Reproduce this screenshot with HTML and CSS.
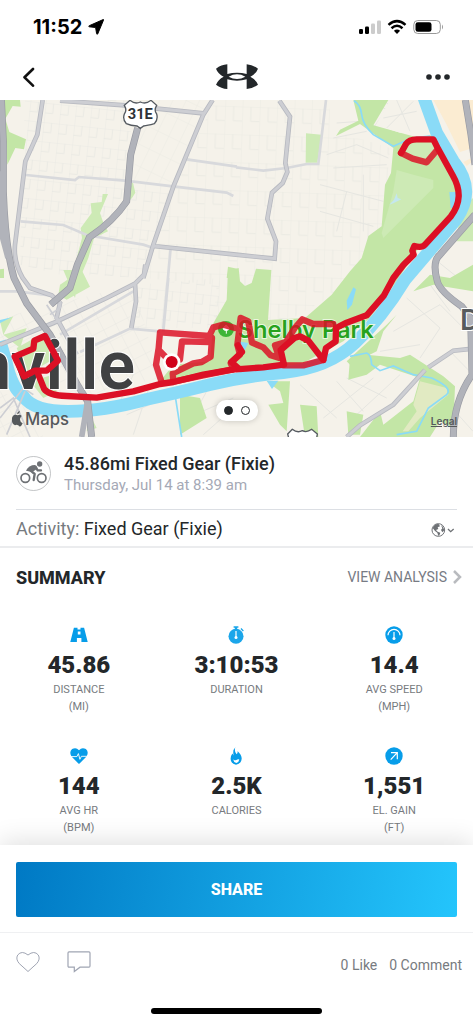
FILE: index.html
```html
<!DOCTYPE html>
<html lang="en">
<head>
<meta charset="utf-8">
<meta name="viewport" content="width=device-width, initial-scale=1">
<title>Workout</title>
<link rel="stylesheet" href="styles.css">
</head>
<body>
<div class="status">
  <div class="status-time">11:52
    <svg class="loc" viewBox="0 0 16 16" aria-hidden="true"><path d="M15.3.5Q15.8.3 15.5 1.1L9.8 14.7Q9.2 16 8.6 14.6L7.6 8.5 1.4 7.8Q0 7.4 1.3 6.7Z" stroke="#000" stroke-linejoin="round"/></svg>
  </div>
  <svg class="status-icons" viewBox="0 0 86 16" aria-hidden="true">
    <rect x="1" y="10" width="4" height="5" rx="1.3"/><rect x="7" y="7.5" width="4" height="7.500" rx="1.3"/>
    <rect x="13" y="4.500" width="4" height="10.500" rx="1.3" fill="#ccc"/><rect x="19" y="1.500" width="4" height="13.500" rx="1.3" fill="#ccc"/>
    <g fill="none" stroke="#000" stroke-width="2.500"><path d="M30.500 5.900Q39 -1.700 47.500 5.900"/><path d="M33.500 9.200Q39 4.300 44.500 9.200"/></g>
    <path d="M39 15 35.900 11.800Q39 9.200 42.100 11.800Z"/>
    <rect x="55.800" y="1.500" width="26.500" height="13" rx="4" fill="none" stroke="#999"/>
    <rect x="57.500" y="3.200" width="16" height="9.600" rx="2.300"/><path d="M84 5.500q2 2.500 0 5z" fill="#999"/>
  </svg>
</div>
<header class="nav">
  <button class="icon-btn" aria-label="Back"><svg width="13" height="20" viewBox="0 0 13 20"><path d="M11 2 2.500 10.300 11 18.700" fill="none" stroke="#111" stroke-width="2.600" stroke-linecap="round" stroke-linejoin="round"/></svg></button>
  <svg class="logo" viewBox="0 0 126 76" role="img" aria-label="Under Armour">
    <path d="M0 14Q16 2 34 1V30Q48 26 63 26T92 30V1Q110 2 126 14 120 30 103 38 120 47 126 62 110 74 92 75V46Q78 50 63 50T34 46V75Q16 74 0 62 6 47 23 38 6 30 0 14Z" fill="#23272a"/>
    <path d="M38 38Q50 31 63 31T88 38Q76 45 63 45T38 38Z" fill="#fff"/>
  </svg>
  <button class="icon-btn nav-more" aria-label="More options"><svg width="26" height="8" viewBox="0 0 26 8" fill="#23272a"><circle cx="4" cy="4" r="2.800"/><circle cx="13" cy="4" r="2.800"/><circle cx="22" cy="4" r="2.800"/></svg></button>
</header>
<main>
<section class="map" aria-label="Route map">
<svg viewBox="0 6 1419 1011" class="map-art">
  <defs>
    <pattern id="ga" width="46" height="58" patternUnits="userSpaceOnUse" patternTransform="rotate(6)"><path d="M0 0H46M0 30H24M0 0V58M24 0V30" fill="none" stroke="#e8e8e2" stroke-width="2.500"/></pattern>
    <pattern id="gb" width="52" height="84" patternUnits="userSpaceOnUse" patternTransform="rotate(2)"><path d="M0 0H52M26 44H52M0 0V84M26 0V44" fill="none" stroke="#e8e8e2" stroke-width="2.500"/></pattern>
    <pattern id="gc" width="40" height="40" patternUnits="userSpaceOnUse" patternTransform="rotate(-27)"><path d="M0 0H40M0 0V40" fill="none" stroke="#e7e7e2" stroke-width="2.500"/></pattern>
    <pattern id="gd" width="36" height="60" patternUnits="userSpaceOnUse" patternTransform="rotate(26)"><path d="M0 0H36M0 0V60" fill="none" stroke="#e8e8e2" stroke-width="2.500"/></pattern>
  </defs>
  <rect y="6" width="1419" height="1011" fill="#f5f2ea"/>
  <path d="M75 6H400L375 330 260 420 220 540 60 500Z" fill="url(#ga)"/>
  <path d="M415 90 440 6H635L520 265 400 250Z" fill="url(#gd)"/>
  <path d="M645 6H980L1010 100 1170 150 1150 380 1080 500 1020 580 860 670H640L650 560 430 540 520 270Z" fill="url(#gb)"/>
  <path d="M395 250 520 265 430 540 240 530 270 420 375 350Z" fill="url(#ga)"/>
  <path d="M410 560 660 540 650 690 400 690Z" fill="url(#ga)"/>
  <path d="M0 660 400 560 480 840 230 900 0 830Z" fill="url(#gc)"/>
  <path d="M0 880 110 930 130 1017H0Z" fill="url(#gc)"/>
  <g fill="none" stroke="#e6e6e1" stroke-width="3">
    <path d="M1010 75 1080 70 1170 100M1120 90 1170 20M1150 6 1250 95M1190 6 1220 90M1090 6 1250 70M1000 120 1100 100M980 170 1070 140 1165 180M1000 210 1160 200M960 260 1150 310M1090 230V400M1040 280 1010 400M960 340 1120 385"/>
    <path d="M1180 700 1320 620 1400 700M1220 600 1320 690 1260 780M1290 560 1350 640M1140 760 1260 740M1010 850 1090 940M1040 840 1160 900M900 860 1010 960M970 960 1120 840M1070 950 1200 830M1330 900 1419 1000M1350 760 1419 830M1300 480 1400 560"/>
    <path d="M350 930 400 830M380 950 520 890M400 1010 450 860M560 990 620 880M560 960 700 900M610 1010 700 930"/>
  </g>
  <!-- Parks -->
  <g fill="#c3e6a6">
    <path d="M12 6H60L62 26 38 24 16 62 28 102 78 124 72 154 46 150 22 200ZM0 514 12 512V540H0ZM684 506 711 512V540H680Z"/>
    <path d="M768 512 812 516 808 544H764ZM1090 6H1165L1120 82 1250 118 1308 110 1365 220 1372 320 1260 445 1190 550 1110 660 1030 730 900 800 708 812 480 850 520 800 630 790 640 676 680 606 684 520 716 510 720 550 735 564 755 555 768 512 814 516 804 666 915 660 995 590 1050 520 1085 480 1105 414 1145 385 1155 260 1173 225 1180 150 1080 78 1008 114 1020 95 1075 68 1060 6Z"/>
    <path d="M1290 530 1350 540 1419 500V580L1300 560 1240 580ZM1190 650 1150 700 1130 760 1050 800 1040 790 1160 680Z"/>
    <path d="M1050 780 1100 770 1200 780 1230 770 1330 835 1365 865 1360 990 1320 970 1290 1017H1080L1140 940 1150 980 1240 910 1260 840 1140 800 1100 830 1045 845Z"/>
    <path d="M720 850H870L860 1000 840 980 805 920 850 915 840 880 800 850ZM900 920 950 925 955 1017H915ZM1040 940 1090 950 1080 1010H1045ZM540 890 600 900 620 960 540 1010Z"/>
  </g>
  <g fill="#cdeab5">
    <path d="M308 288H324L300 345 312 380 324 400 282 420 265 480 240 540H214L246 420 242 390 275 345 272 316 305 312ZM398 250 406 284 396 300 375 320ZM918 106 964 110 952 194H917ZM180 560 245 516 270 566 200 605 175 590ZM50 750 140 700 150 790 80 830ZM90 850 160 830 170 880 130 900ZM270 950 290 990 260 1000ZM10 710 80 690 60 750ZM0 670 40 655 10 710ZM190 516 240 516 225 600Z"/>
    <path d="M1190 216 1240 230 1300 246 1300 270 1150 420 1145 405 1180 280ZM1380 340 1419 300V430H1370Z"/>
  </g>
  <path d="M1205 150 1225 136 1300 134 1304 156 1276 186 1238 176Z" fill="#cdeab5"/>
  <path d="M1128 80 1170 6H1256L1290 98 1200 104Z" fill="#f5f2ea"/>
  <path d="M1150 60 1250 40M1190 6 1230 100M1160 90 1240 10" fill="none" stroke="#e6e6e1" stroke-width="3"/>
  <path d="M1300 6H1419V150L1380 162 1340 80Z" fill="#fbecd2"/>
  <path d="M1390 192 1410 182 1419 190 1400 204Z" fill="#fbecd2"/>
  <path d="M1260 850 1340 870 1345 890 1260 960 1225 1000H1208L1250 940 1240 920Z" fill="#e1eac2"/>
  <!-- River -->
  <path d="M1272 0 1310 105 1360 190Q1430 275 1368 365L1300 445 1215 545Q1145 660 1065 735T850 824Q730 835 630 860T440 904Q310 940 205 940T70 895Q35 870 18 790L0 730" fill="none" stroke="#8adbf7" stroke-width="38"/>
  <path d="M800 848H835L816 873ZM1348 282H1370V330H1352ZM1040 608 1060 568 1068 574 1056 620 1042 636ZM0 666 35 658 0 675ZM714 730 745 735 735 755 708 760Z" fill="#8adbf7"/>
  <path d="M1062 8Q1082 20 1085 50T1120 110L1180 145 1235 120 1290 114M1050 775 1100 765Q1114 770 1115 800L1140 818 1180 804 1240 830 1295 840Q1360 870 1340 890L1285 930 1250 1000 1190 1010M525 890 545 1017" fill="none" stroke="#8adbf7" stroke-width="5"/>
  <path d="M1168 320 1182 305 1190 286 1193 300 1204 304 1180 316Z" fill="#c4e7ef"/>
  <!-- Roads -->
  <g fill="none" stroke="#d8d9dc" stroke-width="8">
    <path d="M78 231 225 246 237 237 375 248 525 266 680 284 700 294M62 370 190 381 262 412 430 440 460 450M560 184 711 206M512 450 490 690M978 6 955 198H920L860 210 790 218 708 208M0 580H50L150 592M180 710 400 580M505 540 490 700M240 762 390 692 480 700"/>
  </g>
  <g fill="none" stroke="#b7b9c0" stroke-width="14">
    <path d="M128 6 112 110 76 190 45 440Q40 490 68 540L90 570 155 592 180 615 170 660 230 770M0 740 160 675 320 600 405 557 432 530 436 500M430 540 460 440 520 266 610 50 638 6M180 8 375 22 610 46M460 444 708 470 824 482 828 430 802 362 816 284 848 255 862 222 856 195 870 56 838 8M405 557 408 610 394 690M1419 752 1360 758 1285 808M1275 816 1180 920 1080 982 1040 1017"/>
  </g>
  <g fill="none" stroke="#cdced3" stroke-width="9">
    <path d="M128 6 112 110 76 190 45 440Q40 490 68 540L90 570 155 592 180 615 170 660 230 770M0 740 160 675 320 600 405 557 432 530 436 500M430 540 460 440 520 266 610 50 638 6M180 8 375 22 610 46M460 444 708 470 824 482 828 430 802 362 816 284 848 255 862 222 856 195 870 56 838 8M405 557 408 610 394 690M1419 752 1360 758 1285 808M1275 816 1180 920 1080 982 1040 1017"/>
    <path d="M150 610Q190 590 180 630L150 650M140 620 170 665M0 960 70 870 100 890M0 930 40 900 90 1017M20 1010 75 880" stroke-width="5"/>
  </g>
  <g fill="none" stroke="#999ba3" stroke-width="21">
    <path d="M4 0 10 130V280Q16 450 42 540L80 616 150 710 235 865 263 910 275 1017M413 90 392 170 380 310Q340 370 268 418L232 500 210 570 152 620M1396 6 1413 110 1425 200M1425 350 1320 470Q1295 490 1312 550 1320 580 1385 625L1412 660 1416 830Q1360 910 1360 1017"/>
  </g>
  <g fill="none" stroke="#b1b3ba" stroke-width="17">
    <path d="M4 0 10 130V280Q16 450 42 540L80 616 150 710 235 865 263 910 275 1017M413 90 392 170 380 310Q340 370 268 418L232 500 210 570 152 620M1396 6 1413 110 1425 200M1425 350 1320 470Q1295 490 1312 550 1320 580 1385 625L1412 660 1416 830Q1360 910 1360 1017M263 910 245 1017M0 220V390L24 480"/>
  </g>
  <!-- Place names -->
  <text x="405" y="874" text-anchor="end" class="city">nville</text>
  <text x="1380" y="696" class="district">D</text>
  <circle cx="678" cy="693" r="24" fill="#3eb537"/><path d="M678 681Q663 694 675 697H682Q694 693 678 681M679 694V707" fill="#fff" stroke="#fff" stroke-width="3"/>
  <text x="713" y="720" class="park">Shelby Park</text>
  <!-- Highway shields -->
  <path d="M390 7Q405 20 421 12 437 20 453 7L470 22Q461 37 470 48 475 65 463 77 442 83 431 84L421 91 411 84Q392 83 379 77 367 65 373 48 382 37 373 22Z" fill="#fff" stroke="#555a60" stroke-width="4"/>
  <text x="421" y="64" text-anchor="middle" class="shield">31E</text>
  <path d="M877 994 863 1008 866 1020H950L952 1008 935 994Q920 1005 907 998 892 1006 877 994Z" fill="#fff" stroke="#555a60" stroke-width="4"/>
  <!-- Route -->
  <g fill="none" stroke="#dc1025" stroke-width="19" stroke-linecap="round" stroke-linejoin="round">
    <g opacity=".84">
      <path d="M1203 165 1238 182 1280 193 1312 155M484 850 468 800 476 750 480 703 628 714 640 688 670 680 705 690"/>
      <path d="M520 850 518 826 580 796 605 792 632 776 636 720M540 784 546 730 628 732M480 760 500 780"/>
      <path d="M700 815 692 795 720 770 712 740 722 660 745 670 756 734 790 748 812 772 838 780 825 742 858 732 884 690 907 664 940 678H1000M850 802 910 802 970 786M524 850 610 832 700 814"/>
    </g>
    <path d="M1203 165 1218 138Q1228 123 1253 124L1300 124 1315 154 1358 232Q1377 265 1376 295T1352 356L1308 404 1275 440Q1265 451 1243 444L1237 458 1241 470 1210 501 1180 540 1152 592 1100 652 1040 674 1008 690 1007 730 978 750 970 786 925 728 900 715 883 720 842 756 852 800 790 808 708 814M716 812 694 792 726 762 714 742"/>
    <path d="M700 814 610 830 520 852 480 858 400 880 290 899 200 894Q145 892 132 872L115 830M44 776 72 835 105 818 140 818 174 788 153 748 135 714 103 728 100 752Z"/>
  </g>
  <circle cx="515" cy="792" r="26" fill="#fff"/><circle cx="515" cy="792" r="18" fill="#d0021b"/>
  <!-- Map provider mark -->
  <g fill="#55595c"><path d="M53 952Q60 948 65 954 59 960 60 965 61 973 68 976 61 992 55 982Q50 979 45 982 34 977 36 960 40 947 53 952Z"/><path d="M51 949Q51 941 59 938 60 946 51 949Z"/></g>
  <text x="75" y="981" class="maps-mark">Maps</text>
</svg>
<div class="dots"><button aria-label="Map" class="dot dot-on"></button><button aria-label="Chart" class="dot"></button></div>
<a href="#legal" class="legal">Legal</a>
</section>

<section class="workout">
  <div class="workout-head">
    <svg class="sport" viewBox="0 0 105 105" aria-hidden="true">
      <circle cx="52.500" cy="52.500" r="51" fill="#fff" stroke="#a4a7ab" stroke-width="2"/>
      <g fill="none" stroke="#6e7175" stroke-width="5"><circle cx="28" cy="66" r="13"/><circle cx="77" cy="66" r="13"/></g>
      <circle cx="71" cy="24" r="8" fill="#6e7175"/>
      <path d="M59 32 43 43 56 54 53 72M59 34 65 43 75 43" fill="none" stroke="#6e7175" stroke-width="7" stroke-linejoin="round" stroke-linecap="round"/><path d="M30 44Q38 27 57 27L66 37 49 48Z" fill="#6e7175"/>
    </svg>
    <div><h1>45.86mi Fixed Gear (Fixie)</h1><p class="date">Thursday, Jul 14 at 8:39 am</p></div>
  </div>
  <div class="activity">
    <p><span>Activity:</span> Fixed Gear (Fixie)</p>
    <button class="icon-btn" aria-label="Privacy: public"><svg width="24" height="16" viewBox="0 0 72 48">
      <circle cx="22" cy="24" r="19" fill="none" stroke="#6e7175" stroke-width="3"/>
      <path d="M5 18Q12 4 23 6L27 13 20 16 22 21 15 24 20 29 28 32 26 38 22 42 19 32 12 27ZM30 9Q39 15 40 25L34 31 30 24 34 19Z" fill="#6e7175"/>
      <path d="M51 21 59 29 68 21" fill="none" stroke="#6e7175" stroke-width="4"/></svg></button>
  </div>
</section>

<section class="summary">
  <div class="summary-head"><h2>SUMMARY</h2>
    <a href="#analysis">VIEW ANALYSIS <svg width="10" height="16" viewBox="0 0 10 16"><path d="M2 2 8 8 2 14" fill="none" stroke="#b9bbbf" stroke-width="2.500"/></svg></a></div>
  <ul class="stats">
    <li><svg viewBox="0 0 60 60"><path d="M13 6H25V12H35V6H47L59 53H38V40H23V53H1ZM26 18V28H35V18Z" fill="#079de9" fill-rule="evenodd"/></svg><strong>45.86</strong><span>DISTANCE<br>(MI)</span></li>
    <li><svg viewBox="0 0 60 60"><g fill="#1ba6ea"><circle cx="30" cy="34" r="25"/><path d="M22 1H38V6H34V12H26V6H22ZM48 7 56 15 53 18 45 10Z"/></g><path d="M30 17V38" stroke="#fff" stroke-width="4"/><circle cx="30" cy="38" r="5" fill="#fff"/></svg><strong>3:10:53</strong><span>DURATION</span></li>
    <li><svg viewBox="0 0 60 60"><circle cx="30" cy="30" r="29" fill="#079de9"/><path d="M10 31A20 20 0 0 1 50 31M30 20V40" fill="none" stroke="#fff" stroke-width="4"/><circle cx="30" cy="42" r="5" fill="#fff"/></svg><strong>14.4</strong><span>AVG SPEED<br>(MPH)</span></li>
    <li><svg viewBox="0 0 60 60"><path d="M30 57 5 32Q-4 16 7 7 20-1 30 11 40-1 53 7 64 16 55 32Z" fill="#079de9"/><path d="M2 32H23L28 22 33 41 38 31H58" fill="none" stroke="#fff" stroke-width="3"/></svg><strong>144</strong><span>AVG HR<br>(BPM)</span></li>
    <li><svg viewBox="0 0 60 60"><path d="M28 1Q23 14 32 24 37 19 35 13 49 26 49 38 47 57 30 59 13 56 12 39 12 30 18 22L22 28Q18 10 28 1Z" fill="#079de9"/><path d="M20 40Q24 47 31 43 38 39 41 42 40 51 31 53 22 51 20 40Z" fill="#fff"/></svg><strong>2.5K</strong><span>CALORIES</span></li>
    <li><svg viewBox="0 0 60 60"><circle cx="30" cy="30" r="29" fill="#079de9"/><path d="M19 42 41 19M20 19H41V41" fill="none" stroke="#fff" stroke-width="4"/></svg><strong>1,551</strong><span>EL. GAIN<br>(FT)</span></li>
  </ul>
</section>
</main>
<footer class="bottom">
  <div class="share-wrap"><button class="share">SHARE</button></div>
  <div class="social">
    <button class="icon-btn" aria-label="Like"><svg width="24" height="22" viewBox="0 0 24 22"><path d="M12 20.500 3.200 12.500Q-.6 8 1.700 4 5.800-1 12 4 18.200-1 22.300 4 24.600 8 20.800 12.500Z" fill="none" stroke="#a0a5b3"/></svg></button>
    <button class="icon-btn" aria-label="Comment"><svg width="24" height="22" viewBox="0 0 24 22"><path d="M2 .8H22Q23 .8 23 2V15Q23 16.200 22 16.200H13L7.300 20.500V16.200H2Q1 16.200 1 15V2Q1 .8 2 .8Z" fill="none" stroke="#a0a5b3" stroke-width="1.200"/></svg></button>
    <p class="counts"><span>0 Like</span><span>0 Comment</span></p>
  </div>
  <div class="home-bar"></div>
</footer>
</body>
</html>
```
FILE: styles.css
```css
* { box-sizing: border-box; }
body {
  margin: 0;
  min-height: 100vh;
  display: flex;
  flex-direction: column;
  background: #fff;
  color: #23272a;
  font-family: Roboto, "Liberation Sans", sans-serif;
}
h1, h2, p, ul { margin: 0; padding: 0; }
svg { display: block; }
.icon-btn { padding: 0; border: 0; background: none; cursor: pointer; }

.status {
  display: flex;
  justify-content: space-between;
  align-items: center;
  height: 54px;
  padding: 0 29px 0 33px;
}
.status-time {
  display: flex;
  align-items: center;
  gap: 6px;
  color: #000;
  font: 700 20px/24px Inter, sans-serif;
}
.loc { width: 16px; }
.status-icons { width: 86px; }

.nav {
  display: grid;
  grid-template-columns: 1fr auto 1fr;
  align-items: center;
  justify-items: start;
  height: 46px;
  padding: 0 22px;
}
.nav-more { justify-self: end; }
.logo { width: 42px; }

.map { position: relative; overflow: hidden; }
.map-art { width: 100%; height: auto; }
.map-art text { font-family: Inter, sans-serif; font-weight: 600; }
.map-art .city { font-family: Roboto, sans-serif; font-size: 204px; fill: #404143; stroke: #fff; stroke-width: 6px; paint-order: stroke; }
.map-art .district { font-size: 85px; fill: #575b5e; stroke: #fff; stroke-width: 6px; paint-order: stroke; }
.map-art .park { font-size: 71px; fill: #27a21d; stroke: #eaf6df; stroke-width: 6px; paint-order: stroke; }
.map-art .shield { font: 700 44px "Liberation Sans Narrow", Roboto, sans-serif; fill: #2d3136; }
.map-art .maps-mark { font-size: 50px; font-weight: 500; fill: #55595c; }
.dots {
  position: absolute;
  left: 50%;
  bottom: 16px;
  transform: translateX(-50%);
  display: flex;
  gap: 8px;
  padding: 6px 8px;
  border-radius: 10px;
  background: #fff;
  box-shadow: 0 0 6px rgba(0, 0, 0, .2);
}
.dot {
  width: 9px;
  height: 9px;
  padding: 0;
  border: 1px solid #23272a;
  border-radius: 50%;
  background: #fff;
}
.dot-on { background: #23272a; }
.legal {
  position: absolute;
  right: 16px;
  bottom: 10px;
  color: #55595c;
  font: 600 10px/12px Inter, sans-serif;
}

.workout { padding: 16px 16px 0; border-bottom: 2px solid #ebecee; }
.workout-head {
  display: flex;
  align-items: flex-start;
  gap: 13px;
  padding-bottom: 14px;
  border-bottom: 1px solid #dcdfe4;
}
.sport { width: 35px; margin-top: 3px; }
h1 { font-size: 18px; line-height: 22px; font-weight: 500; }
.date { color: #a5a9b6; font-size: 15px; line-height: 20px; }
.activity {
  display: flex;
  align-items: center;
  justify-content: space-between;
  height: 36px;
  font-size: 18px;
}
.activity .icon-btn { padding: 4px 2px 0 0; }
.activity span { color: #777b80; }

.summary { padding-bottom: 8px; }
.summary-head {
  display: flex;
  align-items: center;
  justify-content: space-between;
  height: 58px;
  padding: 0 11px 0 16px;
}
h2 { font-size: 18px; font-weight: 800; }
.summary-head a {
  display: flex;
  align-items: center;
  gap: 5px;
  color: #777b84;
  font-size: 14px;
  text-decoration: none;
}
.stats {
  display: grid;
  grid-template-columns: repeat(3, 1fr);
  row-gap: 32px;
  padding-top: 20px;
  list-style: none;
}
.stats li { display: flex; flex-direction: column; align-items: center; text-align: center; }
.stats svg { width: 18px; }
.stats strong { margin-top: 7px; font-size: 24px; line-height: 28px; font-weight: 900; }
.stats span { padding-top: 2px; color: #777b80; font-size: 11px; line-height: 17px; }

.bottom {
  position: sticky;
  bottom: 0;
  margin-top: auto;
  background: #fff;
  box-shadow: 0 -4px 24px rgba(0, 0, 0, .12);
}
.share-wrap { padding: 17px 16px 15px; border-bottom: 1px solid #eff0f2; }
.share {
  width: 100%;
  height: 55px;
  border: 0;
  border-radius: 2px;
  background: linear-gradient(100deg, #0079c4, #24c5fc);
  color: #fff;
  font: 800 16px Roboto, sans-serif;
}
.social { display: flex; align-items: center; gap: 27px; padding: 16px 11px 0 16px; }
.counts { display: flex; gap: 12px; margin-left: auto; padding-top: 6px; color: #777b80; font-size: 14px; line-height: 20px; }
.home-bar {
  width: 36%;
  height: 6px;
  margin: 33px auto 9px;
  border-radius: 3px;
  background: #000;
}
```
